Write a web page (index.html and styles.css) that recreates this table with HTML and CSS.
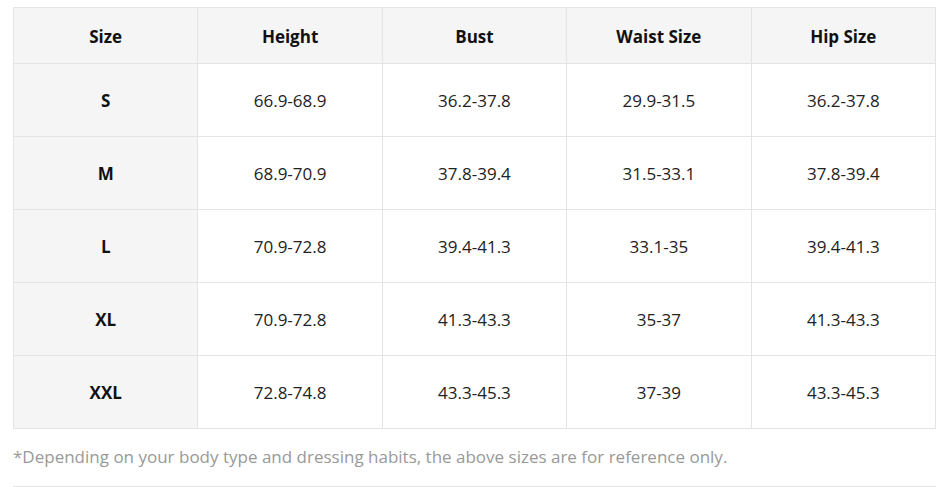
FILE: index.html
```html
<!DOCTYPE html>
<html>
<head>
<meta charset="utf-8">
<link rel="stylesheet" href="styles.css">
</head>
<body>
<div class="wrap">
<table class="chart">
<thead>
<tr><th>Size</th><th>Height</th><th>Bust</th><th>Waist Size</th><th>Hip Size</th></tr>
</thead>
<tbody>
<tr><th>S</th><td>66.9-68.9</td><td>36.2-37.8</td><td>29.9-31.5</td><td>36.2-37.8</td></tr>
<tr><th>M</th><td>68.9-70.9</td><td>37.8-39.4</td><td>31.5-33.1</td><td>37.8-39.4</td></tr>
<tr><th>L</th><td>70.9-72.8</td><td>39.4-41.3</td><td>33.1-35</td><td>39.4-41.3</td></tr>
<tr><th>XL</th><td>70.9-72.8</td><td>41.3-43.3</td><td>35-37</td><td>41.3-43.3</td></tr>
<tr><th>XXL</th><td>72.8-74.8</td><td>43.3-45.3</td><td>37-39</td><td>43.3-45.3</td></tr>
</tbody>
</table>
<p class="note">*Depending on your body type and dressing habits, the above sizes are for reference only.</p>
</div>
</body>
</html>
```
FILE: styles.css
```css
html, body { margin: 0; padding: 0; background: #fff; }
body { font-family: "Open Sans", "Noto Sans", sans-serif; color: #222; }
.wrap { width: 923px; padding: 7px 0 0 13px; }
.chart { width: 923px; border-collapse: collapse; table-layout: fixed; }
.chart th, .chart td {
  border: 1px solid #e4e4e4;
  text-align: center;
  font-size: 17px;
  padding: 0;
}
.chart thead th { height: 53px; padding-top: 2px; background: #f5f5f5; font-weight: 700; color: #111; }
.chart tbody th { background: #f5f5f5; font-weight: 700; color: #111; }
.chart tbody td, .chart tbody th { height: 72px; }
.chart td { font-weight: 400; color: #222; }
.note {
  margin: 0;
  padding: 16px 0 17px 0;
  font-size: 17px;
  line-height: 24px;
  color: #999;
  border-bottom: 1px solid #e4e4e4;
}
```
